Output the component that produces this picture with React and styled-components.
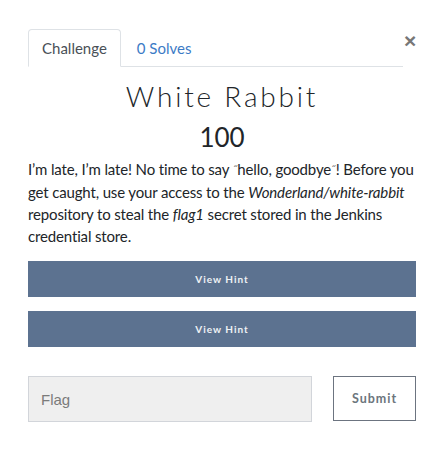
import styled, { createGlobalStyle } from "styled-components";

const GlobalStyle = createGlobalStyle`
  body {
    margin: 0;
    background: #fff;
    font-family: "Lato", "Noto Sans", sans-serif;
    color: #212529;
  }
`;

const Modal = styled.div`
  width: 388px;
  padding: 29px 28px 0;
`;

const Header = styled.div`
  display: flex;
  align-items: flex-start;
`;

const Tabs = styled.div`
  flex: 1;
  display: flex;
  border-bottom: 1px solid #dee2e6;
`;

const Tab = styled.div`
  margin-bottom: -1px;
  padding: 8px ${(p) => (p.active ? "13px" : "15px")};
  font-size: 15px;
  line-height: 20px;
  border: 1px solid ${(p) => (p.active ? "#dee2e6" : "transparent")};
  border-bottom-color: ${(p) => (p.active ? "#fff" : "transparent")};
  border-radius: 4px 4px 0 0;
  background: ${(p) => (p.active ? "#fff" : "transparent")};
  color: ${(p) => (p.active ? "#495057" : "#3c7bc6")};
`;

const Close = styled.div`
  width: 12px;
  margin-left: 1px;
  padding-top: 4px;
  font-family: "Liberation Sans", sans-serif;
  font-size: 21px;
  line-height: 16px;
  font-weight: 700;
  color: #777;
  text-align: center;
`;

const Title = styled.h2`
  margin: 12px 0 0;
  text-align: center;
  font-family: "Lato", sans-serif;
  font-weight: 300;
  font-size: 28px;
  line-height: 34px;
  letter-spacing: 2.8px;
  color: #212529;
`;

const Points = styled.h3`
  margin: 8px 0 0;
  text-align: center;
  font-weight: 400;
  font-size: 26px;
  line-height: 32px;
  color: #212529;
`;

const Description = styled.p`
  margin: 5px 0 0;
  font-size: 15px;
  line-height: 22px;
  letter-spacing: -0.15px;
  color: #212529;
`;

const Quote = styled.span`
  font-size: 12px;
  color: #666;
  vertical-align: 1px;
`;

const Hints = styled.div`
  display: flex;
  flex-direction: column;
  gap: 14px;
  margin-top: 14px;
`;

const HintButton = styled.button`
  height: 36px;
  width: 100%;
  border: none;
  background: #5c7290;
  color: #eef1f5;
  font-family: "Lato", sans-serif;
  font-weight: 700;
  font-size: 10px;
  letter-spacing: 1px;
`;

const SubmitRow = styled.div`
  display: flex;
  gap: 21px;
  margin-top: 29px;
`;

const FlagInput = styled.input`
  flex: 1;
  height: 46px;
  box-sizing: border-box;
  padding: 0 12px;
  border: 1px solid #d2d5da;
  background: #efefef;
  font-family: "Liberation Sans", sans-serif;
  font-size: 15px;
  outline: none;
  &::placeholder {
    color: #7b7b7b;
  }
`;

const SubmitButton = styled.button`
  width: 83px;
  height: 45px;
  box-sizing: border-box;
  border: 1px solid #6c7480;
  background: #fff;
  color: #6c757d;
  font-family: "Lato", sans-serif;
  font-weight: 700;
  font-size: 12.5px;
  letter-spacing: 1px;
`;

export default function App() {
  return (
    <>
      <GlobalStyle />
      <Modal>
        <Header>
          <Tabs>
            <Tab active>Challenge</Tab>
            <Tab>0 Solves</Tab>
          </Tabs>
          <Close>×</Close>
        </Header>
        <Title>White Rabbit</Title>
        <Points>100</Points>
        <Description>
          I’m late, I’m late! No time to say <Quote>˝</Quote>hello, goodbye<Quote>˝</Quote>! Before you
          get caught, use your access to the <em>Wonderland/white-rabbit</em> repository to steal the{" "}
          <em>flag1</em> secret stored in the Jenkins credential store.
        </Description>
        <Hints>
          <HintButton>View Hint</HintButton>
          <HintButton>View Hint</HintButton>
        </Hints>
        <SubmitRow>
          <FlagInput placeholder="Flag" />
          <SubmitButton>Submit</SubmitButton>
        </SubmitRow>
      </Modal>
    </>
  );
}
